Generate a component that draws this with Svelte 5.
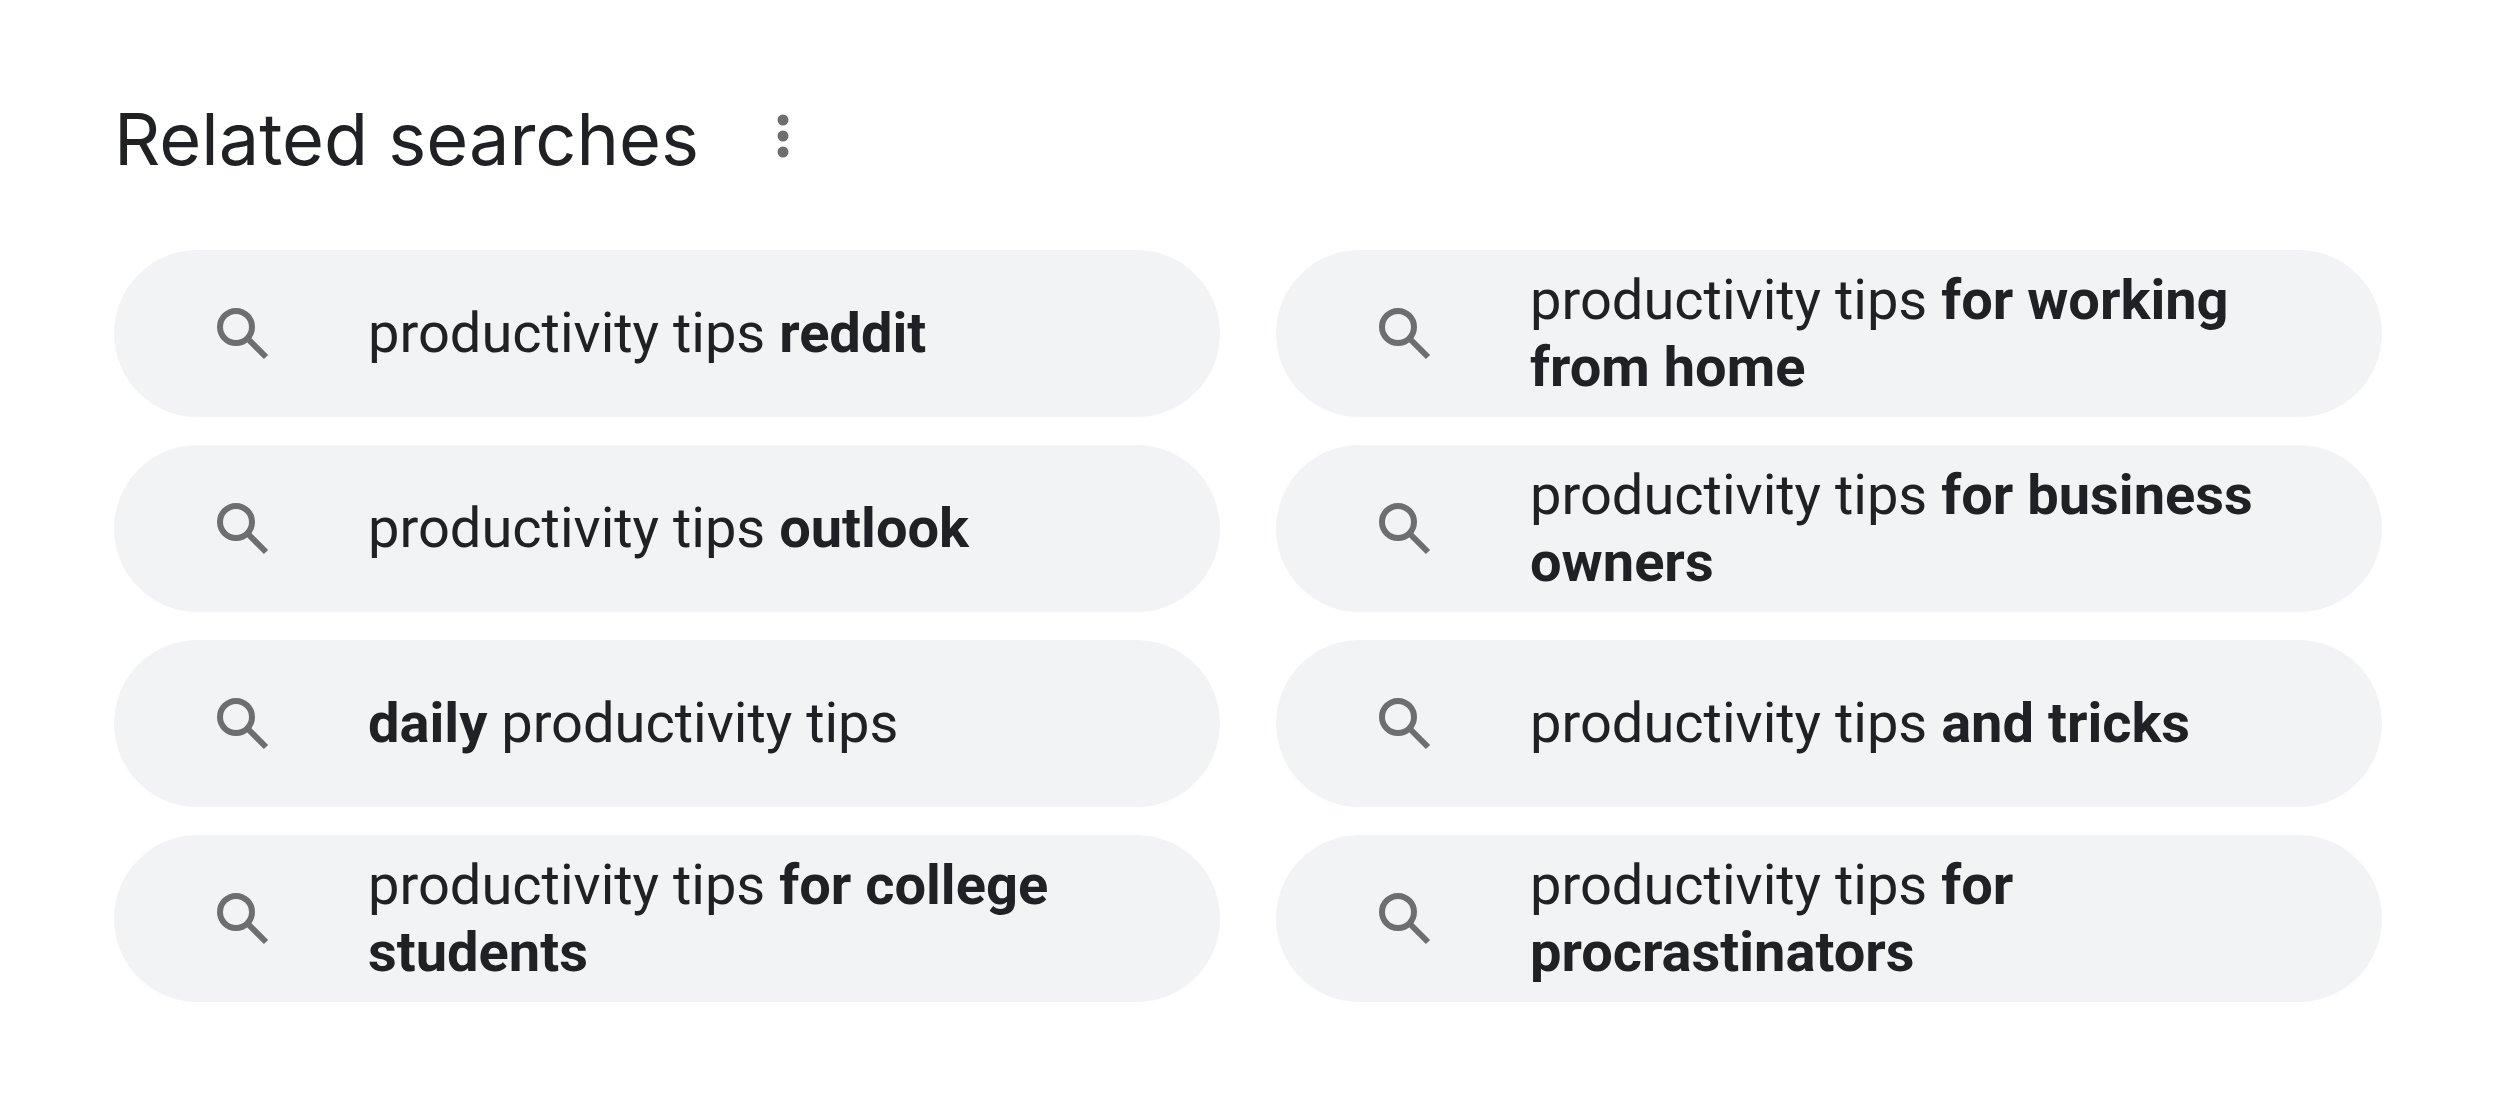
<script lang="ts">
  type Part = { text: string; bold?: boolean };

  const searches: Part[][] = [
    [{ text: "productivity tips " }, { text: "reddit", bold: true }],
    [{ text: "productivity tips " }, { text: "for working from home", bold: true }],
    [{ text: "productivity tips " }, { text: "outlook", bold: true }],
    [{ text: "productivity tips " }, { text: "for business owners", bold: true }],
    [{ text: "daily", bold: true }, { text: " productivity tips" }],
    [{ text: "productivity tips " }, { text: "and tricks", bold: true }],
    [{ text: "productivity tips " }, { text: "for college students", bold: true }],
    [{ text: "productivity tips " }, { text: "for procrastinators", bold: true }],
  ];

  function href(parts: Part[]) {
    return `#${encodeURIComponent(parts.map((part) => part.text).join(""))}`;
  }
</script>

<section class="related">
  <header class="related-header">
    <h2>Related searches</h2>
    <button type="button" class="more" aria-label="About this result">
      <svg viewBox="0 0 64 64" aria-hidden="true">
        <circle cx="32" cy="16" r="5.5" />
        <circle cx="32" cy="32" r="5.5" />
        <circle cx="32" cy="48" r="5.5" />
      </svg>
    </button>
  </header>

  <nav class="search-grid" aria-label="Related searches">
    {#each searches as parts}
      <a class="search-pill" href={href(parts)}>
        <svg class="search-icon" viewBox="0 0 52 52" aria-hidden="true">
          <circle cx="19" cy="19" r="16" />
          <path d="M30 30 49 49" />
        </svg>
        <span class="search-text">
          {#each parts as part}{#if part.bold}<b>{part.text}</b>{:else}{part.text}{/if}{/each}
        </span>
      </a>
    {/each}
  </nav>
</section>

<style>
  :global(body) {
    margin: 0;
    background: #fff;
  }

  .related {
    padding: 96px 118px 108px 114px;
    color: #202124;
    font-family: Roboto, Arial, sans-serif;
  }

  .related-header {
    display: flex;
    align-items: center;
    gap: 52px;
    height: 80px;
    margin-bottom: 74px;
  }

  h2 {
    margin: 0;
    padding-top: 6px;
    font-family: "Google Sans", Inter, sans-serif;
    font-size: 72px;
    font-weight: 400;
    line-height: 80px;
  }

  .more {
    width: 64px;
    height: 64px;
    padding: 0;
    border: 0;
    background: none;
    cursor: pointer;
  }

  .more svg {
    display: block;
    width: 100%;
    fill: #6d6e70;
  }

  .search-grid {
    display: grid;
    grid-template-columns: 1fr 1fr;
    gap: 28px 56px;
  }

  .search-pill {
    display: flex;
    align-items: center;
    box-sizing: border-box;
    min-height: 167px;
    padding: 0 112px 0 103px;
    border-radius: 84px;
    background: #f1f3f4;
    color: inherit;
    text-decoration: none;
  }

  .search-icon {
    flex: none;
    width: 52px;
    height: 52px;
    margin-right: 99px;
    fill: none;
    stroke: #6d6e70;
    stroke-width: 6;
  }

  .search-text {
    font-size: 56px;
    line-height: 67px;
  }

  b {
    font-weight: 700;
  }
</style>
